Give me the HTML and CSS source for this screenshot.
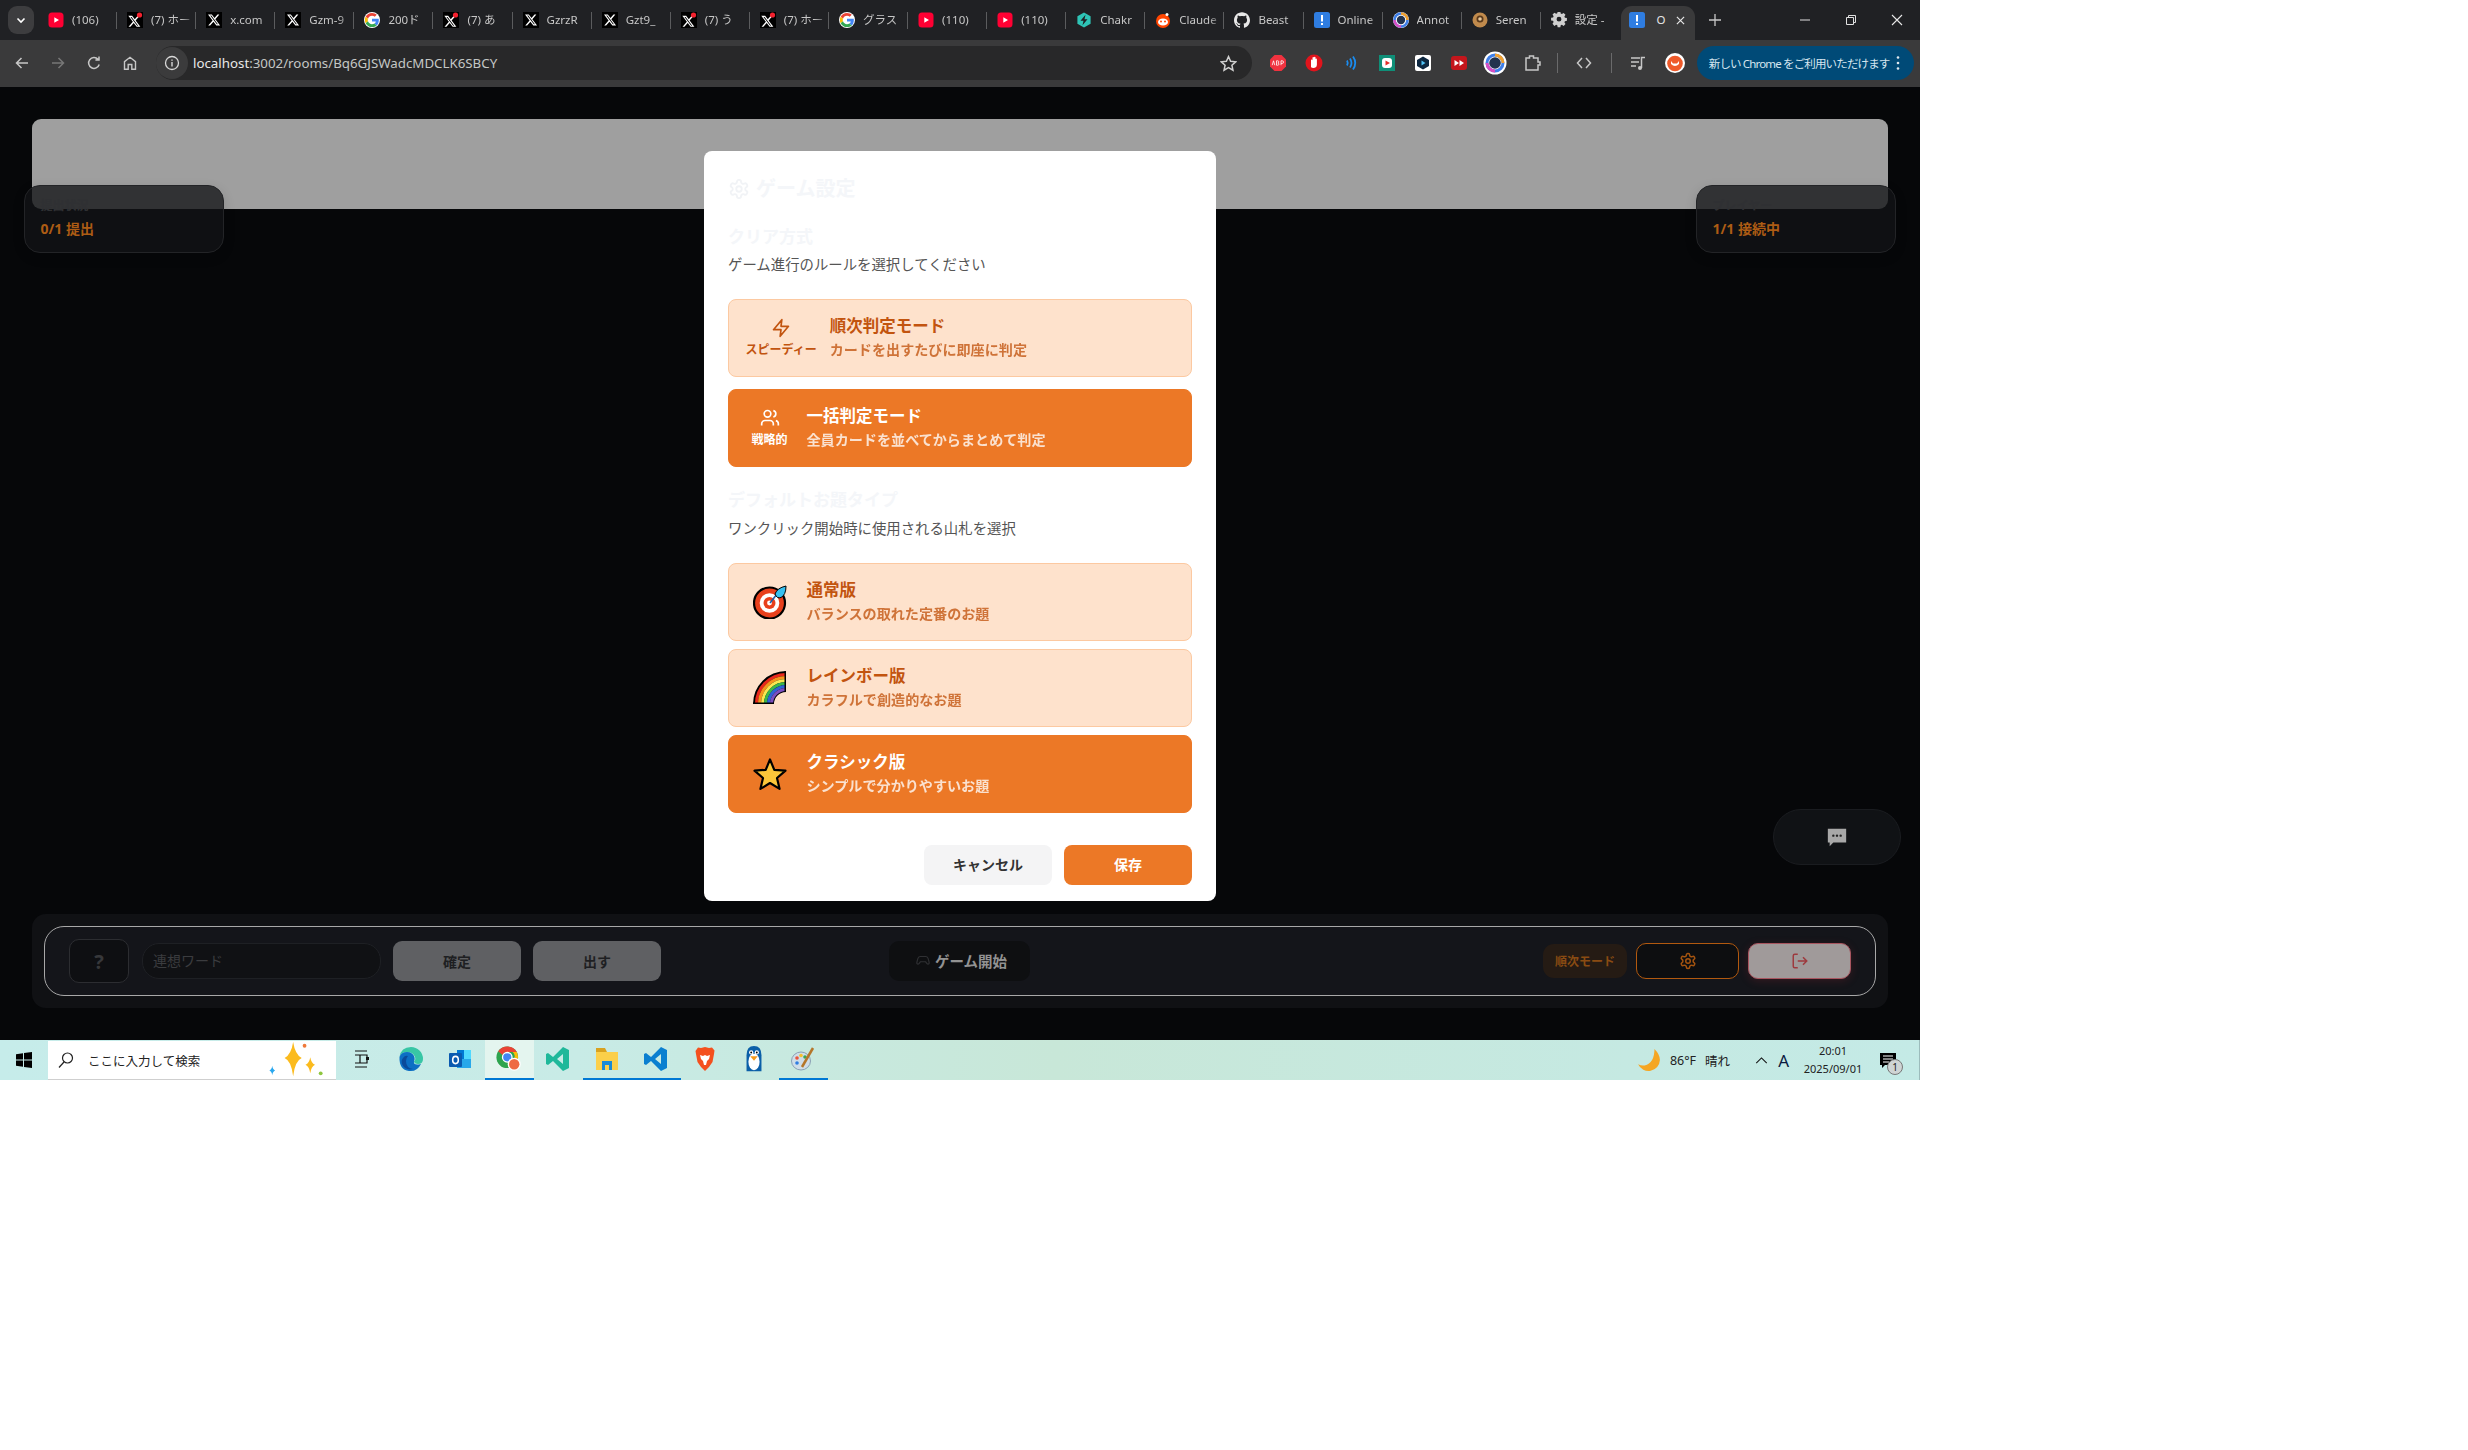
FILE: index.html
```html
<!DOCTYPE html>
<html lang="ja">
<head>
<meta charset="utf-8">
<title>Online</title>
<link rel="stylesheet" href="styles.css">
</head>
<body>
<svg class="sprite" xmlns="http://www.w3.org/2000/svg">
  <symbol id="yt" viewBox="0 0 16 16"><rect x="0.5" y="0.5" width="15" height="15" rx="3.5" fill="#ff0033"/><path d="M6.3 5.2v5.6L11 8z" fill="#fff"/></symbol>
  <symbol id="x" viewBox="0 0 16 16"><rect width="16" height="16" fill="#000"/><path transform="translate(1.3 1.3) scale(.56)" fill="#fff" d="M18.244 2.25h3.308l-7.227 8.26 8.502 11.24H16.17l-5.214-6.817L4.99 21.75H1.68l7.73-8.835L1.254 2.25H8.08l4.713 6.231zm-1.161 17.52h1.833L7.084 4.126H5.117z"/></symbol>
  <symbol id="xd" viewBox="0 0 16 16"><rect width="16" height="16" fill="#000"/><path transform="translate(.6 2.6) scale(.56)" fill="#fff" d="M18.244 2.25h3.308l-7.227 8.26 8.502 11.24H16.17l-5.214-6.817L4.99 21.75H1.68l7.73-8.835L1.254 2.25H8.08l4.713 6.231zm-1.161 17.52h1.833L7.084 4.126H5.117z"/><circle cx="12.5" cy="3" r="2.6" fill="#f4212e"/></symbol>
  <symbol id="g" viewBox="-3 -3 54 54"><circle cx="24" cy="24" r="27" fill="#fff"/><path fill="#EA4335" d="M24 9.5c3.54 0 6.71 1.22 9.21 3.6l6.85-6.85C35.9 2.38 30.47 0 24 0 14.62 0 6.51 5.38 2.56 13.22l7.98 6.19C12.43 13.72 17.74 9.5 24 9.5z"/><path fill="#4285F4" d="M46.98 24.55c0-1.57-.15-3.09-.38-4.55H24v9.02h12.94c-.58 2.96-2.26 5.48-4.78 7.18l7.73 6c4.51-4.18 7.09-10.36 7.09-17.65z"/><path fill="#FBBC05" d="M10.53 28.59c-.48-1.45-.76-2.99-.76-4.59s.27-3.14.76-4.59l-7.98-6.19C.92 16.46 0 20.12 0 24c0 3.88.92 7.54 2.56 10.78l7.97-6.19z"/><path fill="#34A853" d="M24 48c6.48 0 11.93-2.13 15.89-5.81l-7.73-6c-2.15 1.45-4.92 2.3-8.16 2.3-6.26 0-11.57-4.22-13.47-9.91l-7.98 6.19C6.51 42.62 14.62 48 24 48z"/></symbol>
  <symbol id="chakra" viewBox="0 0 16 16"><path d="M8 .5l6.6 3.7v7.6L8 15.5l-6.6-3.7V4.200z" fill="#2ec4b6"/><path d="M9.5 2.800L4.500 8.800h3l-1 4.400 5-6h-3z" fill="#202124"/></symbol>
  <symbol id="reddit" viewBox="0 0 16 16"><circle cx="8" cy="9" r="7" fill="#ff4500"/><circle cx="12" cy="2.500" r="1.500" fill="#fff"/><ellipse cx="8" cy="10" rx="5" ry="3.600" fill="#fff"/><circle cx="6" cy="9.500" r="1" fill="#ff4500"/><circle cx="10" cy="9.500" r="1" fill="#ff4500"/></symbol>
  <symbol id="gh" viewBox="0 0 24 24"><path fill="#e8e8e8" d="M12 .297c-6.63 0-12 5.373-12 12 0 5.303 3.438 9.8 8.205 11.385.6.113.82-.258.82-.577 0-.285-.01-1.04-.015-2.04-3.338.724-4.042-1.61-4.042-1.61C4.422 18.07 3.633 17.7 3.633 17.7c-1.087-.744.084-.729.084-.729 1.205.084 1.838 1.236 1.838 1.236 1.07 1.835 2.809 1.305 3.495.998.108-.776.417-1.305.76-1.605-2.665-.3-5.466-1.332-5.466-5.93 0-1.31.465-2.38 1.235-3.22-.135-.303-.54-1.523.105-3.176 0 0 1.005-.322 3.3 1.23.96-.267 1.98-.399 3-.405 1.02.006 2.04.138 3 .405 2.28-1.552 3.285-1.23 3.285-1.23.645 1.653.24 2.873.12 3.176.765.84 1.23 1.91 1.23 3.22 0 4.61-2.805 5.625-5.475 5.92.42.36.81 1.096.81 2.22 0 1.606-.015 2.896-.015 3.286 0 .315.21.69.825.57C20.565 22.092 24 17.592 24 12.297c0-6.627-5.373-12-12-12"/></symbol>
  <symbol id="online" viewBox="0 0 16 16"><rect width="16" height="16" rx="2.500" fill="#2f7de1"/><rect x="7" y="3" width="2" height="6.500" fill="#fff"/><rect x="7" y="11" width="2" height="2" fill="#fff"/></symbol>
  <symbol id="annot" viewBox="0 0 16 16"><circle cx="8" cy="8" r="8" fill="#fff"/><circle cx="8" cy="8" r="6.500" fill="none" stroke="#3f7fe8" stroke-width="2.600"/><path d="M8 1.500a6.500 6.500 0 0 1 6.500 6.500" fill="none" stroke="#f2a12e" stroke-width="2.600"/><path d="M1.500 8A6.500 6.500 0 0 0 8 14.500" fill="none" stroke="#d84fc4" stroke-width="2.600"/><circle cx="8" cy="8" r="4.200" fill="#23334d"/></symbol>
  <symbol id="seren" viewBox="0 0 16 16"><circle cx="8" cy="8" r="7.500" fill="#c08a4c"/><circle cx="8" cy="7" r="3.500" fill="#5a3a1c"/><circle cx="8" cy="7" r="1.800" fill="#e9c89a"/></symbol>
  <symbol id="cog" viewBox="0 0 16 16"><path fill="#cfcfcf" fill-rule="evenodd" d="M6.500 0h3l.4 2.200 1.300.6 1.900-1.200 2.100 2.100-1.200 1.900.6 1.300 2.200.4v3l-2.200.4-.6 1.300 1.200 1.900-2.100 2.100-1.900-1.200-1.300.6-.4 2.200h-3l-.4-2.200-1.300-.6-1.900 1.200L.8 13.600 2 11.700l-.6-1.300L-.800 10V7l2.200-.4.600-1.300L.8 3.400l2.100-2.100 1.900 1.200 1.300-.6zM8 5.800a2.700 2.700 0 1 0 0 5.400 2.700 2.700 0 0 0 0-5.400z" transform="translate(.8 -.5) scale(.9)"/></symbol>
  <symbol id="gear" viewBox="0 0 24 24"><path d="M12.220 2h-.44a2 2 0 0 0-2 2v.18a2 2 0 0 1-1 1.730l-.43.250a2 2 0 0 1-2 0l-.15-.08a2 2 0 0 0-2.730.730l-.22.380a2 2 0 0 0 .730 2.730l.15.100a2 2 0 0 1 1 1.720v.510a2 2 0 0 1-1 1.740l-.15.090a2 2 0 0 0-.730 2.730l.22.380a2 2 0 0 0 2.730.730l.15-.08a2 2 0 0 1 2 0l.43.250a2 2 0 0 1 1 1.730V20a2 2 0 0 0 2 2h.44a2 2 0 0 0 2-2v-.18a2 2 0 0 1 1-1.730l.43-.25a2 2 0 0 1 2 0l.15.080a2 2 0 0 0 2.730-.730l.22-.39a2 2 0 0 0-.730-2.730l-.15-.08a2 2 0 0 1-1-1.740v-.5a2 2 0 0 1 1-1.740l.15-.09a2 2 0 0 0 .730-2.730l-.22-.38a2 2 0 0 0-2.730-.73l-.15.080a2 2 0 0 1-2 0l-.43-.25a2 2 0 0 1-1-1.730V4a2 2 0 0 0-2-2z"/><circle cx="12" cy="12" r="3"/></symbol>
</svg>

<div class="screen">
  <div class="tabstrip">
    <div class="tablist"><svg class="ic16" viewBox="0 0 16 16"><path d="M4.500 6.500 8 10l3.500-3.500" fill="none" stroke="#fff" stroke-width="1.600"/></svg></div>
    <div class="tab"><svg class="fav"><use href="#yt"/></svg><span class="tt">(106)</span></div>
    <div class="tab"><svg class="fav"><use href="#xd"/></svg><span class="tt">(7) ホー</span></div>
    <div class="tab"><svg class="fav"><use href="#x"/></svg><span class="tt">x.com</span></div>
    <div class="tab"><svg class="fav"><use href="#x"/></svg><span class="tt">Gzm-9</span></div>
    <div class="tab"><svg class="fav"><use href="#g"/></svg><span class="tt">200ド</span></div>
    <div class="tab"><svg class="fav"><use href="#xd"/></svg><span class="tt">(7) あ</span></div>
    <div class="tab"><svg class="fav"><use href="#x"/></svg><span class="tt">GzrzR</span></div>
    <div class="tab"><svg class="fav"><use href="#x"/></svg><span class="tt">Gzt9_</span></div>
    <div class="tab"><svg class="fav"><use href="#xd"/></svg><span class="tt">(7) う</span></div>
    <div class="tab"><svg class="fav"><use href="#xd"/></svg><span class="tt">(7) ホー</span></div>
    <div class="tab"><svg class="fav"><use href="#g"/></svg><span class="tt">グラス</span></div>
    <div class="tab"><svg class="fav"><use href="#yt"/></svg><span class="tt">(110)</span></div>
    <div class="tab"><svg class="fav"><use href="#yt"/></svg><span class="tt">(110)</span></div>
    <div class="tab"><svg class="fav"><use href="#chakra"/></svg><span class="tt">Chakr</span></div>
    <div class="tab"><svg class="fav"><use href="#reddit"/></svg><span class="tt">Claude</span></div>
    <div class="tab"><svg class="fav"><use href="#gh"/></svg><span class="tt">Beast</span></div>
    <div class="tab"><svg class="fav"><use href="#online"/></svg><span class="tt">Online</span></div>
    <div class="tab"><svg class="fav"><use href="#annot"/></svg><span class="tt">Annot</span></div>
    <div class="tab"><svg class="fav"><use href="#seren"/></svg><span class="tt">Seren</span></div>
    <div class="tab"><svg class="fav"><use href="#cog"/></svg><span class="tt">設定 -</span></div>
    <div class="tab-active"><svg class="fav"><use href="#online"/></svg><span class="tt tt-active">O</span><svg class="closex" viewBox="0 0 10 10"><path d="M1 1l8 8M9 1l-8 8" stroke="#e8e8e8" stroke-width="1.300"/></svg></div>
    <div class="newtab"><svg class="ic12" viewBox="0 0 12 12"><path d="M6 0v12M0 6h12" stroke="#c8c8c8" stroke-width="1.300"/></svg></div>
    <div class="winctl"><svg class="ic10" viewBox="0 0 10 10"><path d="M0 5h10" stroke="#e0e0e0"/></svg></div>
    <div class="winctl"><svg class="ic10" viewBox="0 0 10 10"><path d="M.5 2.500h7v7h-7zM2.500 2.500v-2h7v7h-2" fill="none" stroke="#e0e0e0"/></svg></div>
    <div class="winctl"><svg class="ic12" viewBox="0 0 12 12"><path d="M1 1l10 10M11 1L1 11" stroke="#e8e8e8" stroke-width="1.100"/></svg></div>
  </div>

  <div class="toolbar">
    <div class="navbtn"><svg class="ic16" viewBox="0 0 16 16"><path d="M14 8H2.500M7.500 3 2.500 8l5 5" fill="none" stroke="#c7c7c7" stroke-width="1.500"/></svg></div>
    <div class="navbtn"><svg class="ic16" viewBox="0 0 16 16"><path d="M2 8h11.500M8.500 3l5 5-5 5" fill="none" stroke="#777" stroke-width="1.500"/></svg></div>
    <div class="navbtn"><svg class="ic16" viewBox="0 0 16 16"><path d="M13.200 9.500A5.400 5.400 0 1 1 12 4.300M13 1.500v3.600H9.400" fill="none" stroke="#c7c7c7" stroke-width="1.500"/></svg></div>
    <div class="navbtn"><svg class="ic16" viewBox="0 0 16 16"><path d="M2.500 14.200V6.700L8 2.300l5.500 4.400v7.500h-3.700V9.500H6.200v4.700z" fill="none" stroke="#c7c7c7" stroke-width="1.400"/></svg></div>
    <div class="omnibox">
      <div class="infochip"><svg class="ic16" viewBox="0 0 16 16"><circle cx="8" cy="8" r="6.500" fill="none" stroke="#d8d8d8" stroke-width="1.300"/><path d="M8 7v4.500M8 4.500v1.300" stroke="#d8d8d8" stroke-width="1.400"/></svg></div>
      <span class="url">localhost<span class="url-dim">:3002/rooms/Bq6GJSWadcMDCLK6SBCY</span></span>
      <svg class="star" viewBox="0 0 16 16"><path d="M8 1.500l2 4.400 4.800.5-3.600 3.200 1 4.700L8 11.900l-4.200 2.400 1-4.700L1.200 6.400 6 5.900z" fill="none" stroke="#d0d0d0" stroke-width="1.400"/></svg>
    </div>
    <div class="exts">
      <div class="ext"><svg class="ic18" viewBox="0 0 18 18"><path d="M5.500 1h7L17 5.500v7L12.500 17h-7L1 12.500v-7z" fill="#f0323f"/><path d="M3.200 11.200l1.300-4.400 1.300 4.400M7.500 6.800v4.400h1.300q1.200-.1 1.200-1.100t-1.200-1.100q1-.1 1-1.100t-1-1.100zM12 11.200V6.800h1.200q1.300 0 1.300 1.300t-1.300 1.300H12" fill="none" stroke="#fff" stroke-width=".8"/></svg></div>
      <div class="ext"><svg class="ic18" viewBox="0 0 18 18"><circle cx="9" cy="9" r="8.500" fill="#e1141c"/><path d="M6 13V6.500q0-1 .7-1t.8 1V4q0-1 .8-1t.7 1v-.5q0-.8.8-.8t.7.8V5q0-.6.700-.6t.700.8V10.500q0 3-3 3.500-2.500 0-3-1z" fill="#fff"/></svg></div>
      <div class="ext"><svg class="ic18" viewBox="0 0 18 18"><path d="M6 6.500q1.500 2.500 0 5M9 4.500q3 4.500 0 9M12 2.500q4.500 6.500 0 13" fill="none" stroke="#1a8cf0" stroke-width="1.800"/></svg></div>
      <div class="ext"><svg class="ic18" viewBox="0 0 18 18"><rect x="1" y="1" width="16" height="16" fill="#0f8f78"/><rect x="4" y="4" width="10" height="10" rx="3" fill="#fff"/><path d="M7.500 6.500v5L12 9z" fill="#e52d27"/></svg></div>
      <div class="ext"><svg class="ic18" viewBox="0 0 18 18"><rect x="1" y="1" width="16" height="16" rx="2" fill="#fff"/><path d="M9 2.500 15 6v6l-6 3.500L3 12V6z" fill="#0d2740"/><path d="M7.500 6.500v5L11.500 9z" fill="#4fc3f7"/></svg></div>
      <div class="ext"><svg class="ic18" viewBox="0 0 18 18"><rect x="1" y="2" width="16" height="14" rx="3" fill="#c4161c"/><path d="M4.500 6v6L9 9zM9.500 6v6L14 9z" fill="#fff"/></svg></div>
      <div class="ext"><svg class="ic24" viewBox="0 0 24 24"><circle cx="12" cy="12" r="11.500" fill="#fff"/><circle cx="12" cy="12" r="8" fill="none" stroke="#3f7fe8" stroke-width="3"/><path d="M12 4a8 8 0 0 1 8 8" fill="none" stroke="#f2a12e" stroke-width="3"/><path d="M4 12a8 8 0 0 0 8 8" fill="none" stroke="#d84fc4" stroke-width="3"/><circle cx="12" cy="12" r="5.800" fill="#23334d"/></svg></div>
      <div class="ext"><svg class="ic18" viewBox="0 0 18 18"><path d="M3 4h3.500V2h4v2H15v4h2v3h-2v5H3z" fill="none" stroke="#c7c7c7" stroke-width="1.500"/></svg></div>
    </div>
    <div class="vsep vsep-a"></div>
    <div class="ext ext-code"><svg class="ic18" viewBox="0 0 18 18"><path d="M7 4 2.500 9 7 14M11 4l4.500 5L11 14" fill="none" stroke="#c7c7c7" stroke-width="1.500"/></svg></div>
    <div class="vsep vsep-b"></div>
    <div class="ext ext-music"><svg class="ic18" viewBox="0 0 18 18"><path d="M2 4h9M2 8h8M2 12h5M12.500 14V3.500H16" fill="none" stroke="#c7c7c7" stroke-width="1.500"/><circle cx="11" cy="14" r="2" fill="#c7c7c7"/></svg></div>
    <div class="ext"><svg class="ic20" viewBox="0 0 20 20"><circle cx="10" cy="10" r="10" fill="#fff"/><circle cx="10" cy="10.500" r="7.800" fill="#ef5a2a"/><path d="M6 8v3q4 4 8 0V8L12 10.500H8z" fill="#fff"/></svg></div>
    <div class="update"><span>新しい Chrome をご利用いただけます</span><svg class="kebab" viewBox="0 0 4 16"><circle cx="2" cy="2.500" r="1.300" fill="#e0e8ee"/><circle cx="2" cy="8" r="1.300" fill="#e0e8ee"/><circle cx="2" cy="13.500" r="1.300" fill="#e0e8ee"/></svg></div>
  </div>

  <main class="stage">
    <div class="hero"></div>
    <section class="statcard statcard-left"><div class="stat-label">提出状況</div><div class="stat-value">0/1 提出</div></section>
    <section class="statcard statcard-right"><div class="stat-label">プレイヤー</div><div class="stat-value">1/1 接続中</div></section>
    <div class="chatbtn"><svg class="chat-ic" viewBox="0 0 24 24"><path d="M2 3h20v15H8l-4 4v-4H2z" fill="#a8a8a8"/><circle cx="8" cy="10.500" r="1.300" fill="#222"/><circle cx="12" cy="10.500" r="1.300" fill="#222"/><circle cx="16" cy="10.500" r="1.300" fill="#222"/></svg></div>

    <div class="dock">
      <div class="dock-inner">
        <div class="qbox">?</div>
        <div class="wordinput">連想ワード</div>
        <div class="graybtn">確定</div>
        <div class="graybtn">出す</div>
        <div class="startbtn"><svg class="pad" viewBox="0 0 24 24"><path d="M7 6h10q3 0 4 4l1.500 6q.5 3-2 3-1.500 0-3-2.500l-1-1.500H7.500l-1 1.500Q5 19 3.500 19q-2.500 0-2-3L3 10q1-4 4-4z" fill="none" stroke="#2f3033" stroke-width="2"/></svg><span>ゲーム開始</span></div>
        <div class="modechip">順次モード</div>
        <div class="iconbtn iconbtn-gear"><svg class="ic18 stroke-gear"><use href="#gear"/></svg></div>
        <div class="iconbtn iconbtn-exit"><svg class="ic18" viewBox="0 0 24 24"><path d="M9 21H5a2 2 0 0 1-2-2V5a2 2 0 0 1 2-2h4M16 17l5-5-5-5M21 12H9" fill="none" stroke="#9d3a3e" stroke-width="2"/></svg></div>
      </div>
    </div>

    <div class="overlay">
      <div class="modal">
        <h2 class="modal-title"><svg class="ic22 stroke-faint"><use href="#gear"/></svg>ゲーム設定</h2>
        <h3 class="sec-head sec-head-first">クリア方式</h3>
        <p class="sec-desc">ゲーム進行のルールを選択してください</p>
        <div class="opts opts-mode">
          <div class="opt">
            <div class="opt-side"><svg class="ic20" viewBox="0 0 24 24"><path d="M13 2 3 14h9l-1 8 10-12h-9z" fill="none" stroke="currentColor" stroke-width="2" stroke-linejoin="round"/></svg><span class="opt-tag">スピーディー</span></div>
            <div><div class="opt-title">順次判定モード</div><div class="opt-desc">カードを出すたびに即座に判定</div></div>
          </div>
          <div class="opt opt-on">
            <div class="opt-side"><svg class="ic20" viewBox="0 0 24 24"><path d="M16 21v-2a4 4 0 0 0-4-4H6a4 4 0 0 0-4 4v2M22 21v-2a4 4 0 0 0-3-3.870M16 3.130a4 4 0 0 1 0 7.750" fill="none" stroke="currentColor" stroke-width="2"/><circle cx="9" cy="7" r="4" fill="none" stroke="currentColor" stroke-width="2"/></svg><span class="opt-tag">戦略的</span></div>
            <div><div class="opt-title">一括判定モード</div><div class="opt-desc">全員カードを並べてからまとめて判定</div></div>
          </div>
        </div>
        <h3 class="sec-head sec-head-second">デフォルトお題タイプ</h3>
        <p class="sec-desc sec-desc-second">ワンクリック開始時に使用される山札を選択</p>
        <div class="opts opts-deck">
          <div class="opt">
            <div class="opt-side"><svg class="emoji" viewBox="0 0 34 34"><circle cx="16.500" cy="18" r="15.500" fill="#e8401c" stroke="#000" stroke-width="2.200"/><circle cx="16.500" cy="18" r="9.800" fill="#fff"/><circle cx="16.500" cy="18" r="6" fill="#e8401c"/><circle cx="16.500" cy="18" r="2.400" fill="#fff"/><path d="M17 18 24 9" stroke="#1c5fa8" stroke-width="1.600"/><path d="M22 9q2-6 11-8 0 9-5 11.500-4 1.500-6-3.500z" fill="#36c0f0" stroke="#000" stroke-width="1"/></svg></div>
            <div><div class="opt-title">通常版</div><div class="opt-desc">バランスの取れた定番のお題</div></div>
          </div>
          <div class="opt">
            <div class="opt-side"><svg class="emoji" viewBox="0 0 34 34"><path d="M0 33A33 33 0 0 1 33 0V21A12 12 0 0 0 21 33z" fill="#000"/><g fill="none" stroke-width="3.100"><path d="M3.500 33A29.500 29.500 0 0 1 33 3.500" stroke="#e8281c"/><path d="M6.500 33A26.500 26.500 0 0 1 33 6.500" stroke="#f7941d"/><path d="M9.500 33A23.500 23.500 0 0 1 33 9.500" stroke="#f9e64f"/><path d="M12.500 33A20.500 20.500 0 0 1 33 12.500" stroke="#3cb54a"/><path d="M15.500 33A17.500 17.500 0 0 1 33 15.500" stroke="#2e63d6"/><path d="M18.500 33A14.500 14.500 0 0 1 33 18.500" stroke="#7a4fc0"/></g><path d="M0 31.500h21V33H0zM31.500 0H33v21h-1.500z" fill="#000"/></svg></div>
            <div><div class="opt-title">レインボー版</div><div class="opt-desc">カラフルで創造的なお題</div></div>
          </div>
          <div class="opt opt-on">
            <div class="opt-side"><svg class="emoji" viewBox="0 0 34 34"><path d="M17 2.500l4.300 10.300 11.200.9-8.500 7.300 2.600 10.900L17 26l-9.600 5.900L10 21 1.500 13.700l11.200-.9z" fill="#fcc63a" stroke="#000" stroke-width="2.200" stroke-linejoin="round"/></svg></div>
            <div><div class="opt-title">クラシック版</div><div class="opt-desc">シンプルで分かりやすいお題</div></div>
          </div>
        </div>
        <div class="modal-actions">
          <div class="mbtn mbtn-cancel">キャンセル</div>
          <div class="mbtn mbtn-save">保存</div>
        </div>
      </div>
    </div>
  </main>

  <footer class="taskbar">
    <div class="startmenu"><svg class="ic18" viewBox="0 0 18 18"><path d="M1 3.200 8 2.200V8.500H1zM9 2 17 1v7.500H9zM1 9.500h7v6.300L1 14.800zM9 9.500h8V17L9 16z" fill="#000"/></svg></div>
    <div class="searchbox">
      <svg class="ic18" viewBox="0 0 18 18"><circle cx="10.500" cy="7" r="5" fill="none" stroke="#222" stroke-width="1.200"/><path d="M7 11 2 16.500" stroke="#222" stroke-width="1.200"/></svg>
      <span class="search-text">ここに入力して検索</span>
      <svg class="sparkle" viewBox="0 0 62 40"><path d="M28 1q2 13 9 17-7 3-9 19-2-16-9-19 7-4 9-17z" fill="#fbbb1e"/><path d="M46 17q1 6 5 8-4 2-5 9-1-7-5-9 4-2 5-8z" fill="#fbbb1e"/><path d="M6 26q.5 4 3 5-2.500 1-3 5-.5-4-3-5 2.500-1 3-5z" fill="#2aa8ef"/><circle cx="40" cy="5" r="2" fill="#ef7a3a"/><circle cx="57" cy="34" r="2" fill="#8ec63f"/></svg>
    </div>
    <div class="tbitem tbitem-view"><svg class="ic18" viewBox="0 0 18 18"><path d="M3 1h12M3 5h12v8H3M8 5v8M3 17h12" fill="none" stroke="#111" stroke-width="1.200"/><rect x="14" y="7" width="3" height="3" fill="#111"/></svg></div>
    <div class="tbitem"><svg class="tbic" viewBox="0 0 26 26"><path d="M13 1a12 12 0 0 1 12 12q0 5-5 5-4 0-4-3 2-1 1-4-2-5-8-5Q3 6 1.500 11 3 1 13 1z" fill="#38c6a5"/><path d="M1.500 11Q3 6 9 6q6 0 7.500 5.500.5 2-.5 3.500-1 5 7 3-4 8-12 7-10-1-9.500-14z" fill="#0c6fc4"/><path d="M8 15q0 7 7 8-8 2-11-5-1-4 1-6 2-3 5-2-2 2-2 5z" fill="#0a4a9a"/></svg></div>
    <div class="tbitem"><svg class="tbic" viewBox="0 0 26 26"><path d="M10 4h14v18H10z" fill="#28a8ea"/><path d="M10 4h7v9h-7z" fill="#0078d4"/><path d="M17 4h7v9h-7z" fill="#50d9ff"/><rect x="2" y="7" width="13" height="14" rx="1" fill="#0a5ab0"/><ellipse cx="8.500" cy="14" rx="2.800" ry="3.600" fill="none" stroke="#fff" stroke-width="1.600"/></svg></div>
    <div class="tbitem tbitem-chrome"><svg class="tbic" viewBox="0 0 30 30"><circle cx="13" cy="13" r="12.500" fill="#2ea44f"/><path d="M13 .5A12.500 12.500 0 0 1 24 7H13a6 6 0 0 0-5.500 3.500L2.500 6A12.500 12.500 0 0 1 13 .5z" fill="#ea4335"/><path d="M24 7a12.500 12.500 0 0 1-9 18l5-9a6 6 0 0 0-1-9z" fill="#fbbc05"/><circle cx="13" cy="13" r="5.500" fill="#4285f4" stroke="#fff" stroke-width="1.500"/><circle cx="21" cy="21" r="7.500" fill="#fff"/><circle cx="21" cy="21" r="6" fill="#ee6a44"/></svg></div>
    <div class="tbitem"><svg class="tbic" viewBox="0 0 26 26"><path d="M18 1l6 3v18l-6 3-10-10-5 4-2-1V8l2-1 5 4zM18 8l-6 5 6 5z" fill="#1fb89a"/></svg></div>
    <div class="tbitem tbitem-run"><svg class="tbic" viewBox="0 0 26 26"><rect x="2" y="6" width="22" height="18" fill="#fbcf4a"/><path d="M2 2h9l2 4H2z" fill="#d9a21f"/><rect x="8" y="15" width="10" height="9" fill="#1a8ad4"/><rect x="11" y="19" width="4" height="5" fill="#fbcf4a"/></svg></div>
    <div class="tbitem tbitem-run"><svg class="tbic" viewBox="0 0 26 26"><path d="M18 1l6 3v18l-6 3-10-10-5 4-2-1V8l2-1 5 4zM18 8l-6 5 6 5z" fill="#0a7fd0"/></svg></div>
    <div class="tbitem"><svg class="tbic" viewBox="0 0 26 26"><path d="M13 1l4 1 3-.5 2.500 3L22 8l-1.500 8L17 21l-4 4-4-4-3.500-5L4 8l-.5-3L6 1.500l3 .5z" fill="#f4501e"/><path d="M8 9l3 1 2-1 2 1 3-1-1 4-2 2-1 4h-2l-1-4-2-2z" fill="#fff"/></svg></div>
    <div class="tbitem"><svg class="tbic" viewBox="0 0 26 30"><path d="M13 1q8 0 8 10v17H5V11Q5 1 13 1z" fill="#0b5fa8"/><ellipse cx="13" cy="18" rx="6" ry="9" fill="#fff"/><circle cx="10" cy="8" r="2.300" fill="#fff"/><circle cx="16" cy="8" r="2.300" fill="#fff"/><circle cx="10" cy="8" r="1" fill="#000"/><circle cx="16" cy="8" r="1" fill="#000"/><path d="M9 12h8l-4 5z" fill="#f59a1c"/></svg></div>
    <div class="tbitem tbitem-run"><svg class="tbic" viewBox="0 0 26 26"><ellipse cx="11" cy="15" rx="9.500" ry="9" fill="#cfdde8" stroke="#8aa0b4"/><circle cx="7" cy="12" r="1.800" fill="#e9553a"/><circle cx="11" cy="9.500" r="1.800" fill="#f5c22e"/><circle cx="15" cy="11" r="1.800" fill="#3aa655"/><circle cx="7" cy="17" r="1.800" fill="#2f7de1"/><path d="M23 2 12 21" stroke="#b5762a" stroke-width="2.500"/></svg></div>
    <div class="tray">
      <svg class="moon" viewBox="0 0 22 22"><path d="M16 1q5 5 5 10A10.500 10.500 0 0 1 1 15q3 1.500 6 1 9-2 9-15z" fill="#f5a623"/></svg>
      <span class="tray-txt tray-temp">86°F</span>
      <span class="tray-txt tray-wx">晴れ</span>
      <svg class="ic-chev" viewBox="0 0 14 8"><path d="M1 7l6-6 6 6" fill="none" stroke="#111" stroke-width="1.200"/></svg>
      <span class="tray-a">A</span>
      <div class="clock"><span>20:01</span><span>2025/09/01</span></div>
      <div class="notif"><svg class="ic16" viewBox="0 0 16 16"><path d="M0 1h16v12H5l-3 3v-3H0z" fill="#000"/><path d="M3 4h10M3 7h10M3 10h6" stroke="#fff"/></svg><span class="badge">1</span></div>
    </div>
  </footer>
</div>
</body>
</html>
```

FILE: styles.css
```css
* { box-sizing: border-box; }
html, body { margin: 0; padding: 0; background: #fff; }
body { font-family: "Noto Sans", "Noto Sans CJK JP", sans-serif; height: 1450px; overflow: hidden; }
h2, h3, p { margin: 0; }
.sprite { position: absolute; width: 0; height: 0; }

.ic10 { width: 10px; height: 10px; display: block; }
.ic12 { width: 12px; height: 12px; display: block; }
.ic16 { width: 16px; height: 16px; display: block; }
.ic18 { width: 18px; height: 18px; display: block; }
.ic20 { width: 20px; height: 20px; display: block; }
.ic22 { width: 22px; height: 22px; display: block; flex: none; }
.ic24 { width: 24px; height: 24px; display: block; }

.screen { width: 1920px; height: 1080px; display: flex; flex-direction: column; overflow: hidden; }

/* tab strip */
.tabstrip { height: 40px; background: #202124; display: flex; align-items: center; flex: none; padding-left: 8px; }
.tablist { width: 26px; height: 28px; margin-right: 4px; border-radius: 9px; background: #3d3d3f; display: flex; align-items: center; justify-content: center; flex: none; }
.tab { width: 79.1px; height: 17px; flex: none; display: flex; align-items: center; gap: 8px; padding-left: 10px; padding-right: 4px; border-right: 1px solid #5b5c5e; }
.tab:nth-last-child(6) { border-right: 0; }
.fav { width: 16px; height: 16px; flex: none; display: block; }
.tt { font-size: 11.5px; line-height: 16px; color: #c7c7c7; white-space: nowrap; flex: 1; -webkit-mask-image: linear-gradient(90deg, #000 75%, rgba(0,0,0,.25)); mask-image: linear-gradient(90deg, #000 75%, rgba(0,0,0,.25)); }
.tab-active { width: 74px; height: 34px; margin-left: 1.6px; margin-top: 6px; flex: none; background: #3a3a3b; border-radius: 11px 11px 0 0; display: flex; align-items: center; padding: 0 11px 6px 8px; gap: 11px; }
.tt-active { flex: 1; color: #e6e6e6; -webkit-mask-image: none; mask-image: none; }
.closex { width: 9px; height: 9px; flex: none; display: block; }
.newtab { width: 40px; display: flex; justify-content: center; flex: none; }
.winctl { width: 46px; height: 40px; display: flex; align-items: center; justify-content: center; flex: none; }
.newtab + .winctl { margin-left: auto; }

/* toolbar */
.toolbar { height: 47px; background: #3a3a3b; flex: none; display: flex; align-items: center; padding: 0 0 1px 4px; }
.navbtn { width: 36px; display: flex; justify-content: center; flex: none; }
.omnibox { width: 1096px; height: 34px; margin-left: 8px; border-radius: 17px; background: #282829; display: flex; align-items: center; flex: none; }
.infochip { width: 32px; height: 32px; border-radius: 50%; background: #3b3b3c; display: flex; align-items: center; justify-content: center; flex: none; }
.url { margin-left: 5px; font-size: 13.3px; color: #e8e8e8; white-space: nowrap; flex: 1; }
.url-dim { color: #c4c7c5; }
.star { width: 17px; height: 17px; margin-right: 15.5px; display: block; flex: none; }
.exts { display: flex; margin-left: 7.5px; flex: none; }
.ext { width: 36.3px; display: flex; justify-content: center; align-items: center; flex: none; }
.vsep { width: 1px; height: 20px; background: #6a6a6b; flex: none; }
.vsep-a { margin-left: 7px; }
.ext-code { margin-left: 8px; }
.vsep-b { margin-left: 9px; }
.ext-music { margin-left: 8px; }
.update { width: 217px; height: 34px; margin-left: 4px; border-radius: 17px; background: #004a77; color: #d6e6f0; font-size: 11.5px; letter-spacing: -.85px; display: flex; align-items: center; justify-content: space-between; padding: 0 14px 0 12px; white-space: nowrap; flex: none; }
.kebab { width: 4px; height: 16px; display: block; flex: none; }

/* app stage */
.stage { position: relative; flex: 1; background: #060709; padding: 32px; display: flex; flex-direction: column; justify-content: space-between; }
.hero { height: 90px; background: #9f9f9f; border-radius: 9px; flex: none; }
.statcard { position: absolute; top: 98px; width: 200px; height: 68px; border: 1px solid #232427; border-radius: 16px; background: rgba(18,19,22,.78); padding: 12px 15.5px; box-shadow: 0 4px 12px rgba(0,0,0,.15); }
.statcard-left { left: 24px; }
.statcard-right { right: 24px; }
.stat-label { font-size: 12px; line-height: 16px; font-weight: 700; color: #2f3033; }
.stat-value { margin-top: 5px; font-size: 14px; line-height: 20px; font-weight: 700; color: #ad5c14; }
.chatbtn { position: absolute; left: 1773px; top: 722px; width: 128px; height: 56px; border-radius: 28px; background: #101215; border: 1px solid #1a1c20; display: flex; align-items: center; justify-content: center; }
.chat-ic { width: 22px; height: 22px; display: block; }

/* dock */
.dock { height: 94px; background: #101114; border-radius: 14px; padding: 12px; flex: none; }
.dock-inner { height: 70px; border: 1.5px solid #a8a8a8; border-radius: 20px; background: #14151a; display: flex; align-items: center; padding: 0 24px; }
.qbox { width: 60px; height: 44px; border: 1px solid #2c2d31; border-radius: 10px; background: #0e0f12; color: #37383b; font-size: 20px; font-weight: 700; display: flex; align-items: center; justify-content: center; flex: none; }
.wordinput { width: 239px; height: 36px; margin-left: 13px; border: 1px solid #1e2024; border-radius: 17px; background: #101114; color: #3b3c3f; font-size: 14px; line-height: 34px; padding-left: 10px; flex: none; }
.graybtn { width: 128px; height: 40px; margin-left: 12px; border-radius: 9px; background: #5f6063; color: #1e1f22; font-size: 14px; font-weight: 700; display: flex; align-items: center; justify-content: center; flex: none; }
.startbtn { width: 141px; height: 40px; margin-left: 228px; padding: 0 0 2px 4px; border-radius: 10px; background: #0e0f11; color: #929292; font-size: 14.5px; font-weight: 700; display: flex; align-items: center; justify-content: center; gap: 5px; flex: none; }
.pad { width: 14px; height: 14px; display: block; }
.modechip { width: 84px; height: 34px; margin-left: auto; border-radius: 11px; background: #251b14; color: #8a4b12; font-size: 12px; font-weight: 700; display: flex; align-items: center; justify-content: center; flex: none; }
.iconbtn { width: 103px; height: 36px; margin-left: 9px; border-radius: 10px; display: flex; align-items: center; justify-content: center; flex: none; }
.iconbtn-gear { background: #0d0e10; border: 1px solid #b2590f; }
.stroke-gear { fill: none; stroke: #a5540f; stroke-width: 2; width: 18px; height: 20px; }
.iconbtn-exit { background: #a09a9a; border: 1px solid #a8555f; box-shadow: 0 2px 8px rgba(150,40,50,.25); }

/* modal */
.overlay { position: absolute; inset: 0; display: flex; justify-content: center; align-items: flex-start; padding-top: 64px; }
.modal { width: 512px; height: 750px; background: #fff; border-radius: 8px; padding: 23px 24px 16px; display: flex; flex-direction: column; }
.modal-title { display: flex; align-items: center; gap: 6px; height: 30px; font-size: 20px; line-height: 30px; font-weight: 700; color: #f4f6f9; }
.stroke-faint { fill: none; stroke: #f1f3f6; stroke-width: 2; }
.sec-head { height: 26px; font-size: 17px; line-height: 26px; font-weight: 700; color: #f4f6f9; }
.sec-head-first { margin-top: 20px; }
.sec-head-second { margin-top: 20px; }
.sec-desc { margin-top: 5px; height: 20px; font-size: 14.4px; line-height: 20px; color: #555; }
.sec-desc-second { margin-top: 6px; }
.opts { display: flex; flex-direction: column; }
.opts-mode { margin-top: 24px; gap: 12px; }
.opts-deck { margin-top: 24px; gap: 8px; }
.opt { height: 78px; border: 1.5px solid #fcc9a1; border-radius: 8px; background: #fee2cc; color: #c2540f; display: flex; align-items: center; gap: 13px; padding-left: 16.5px; }
.opt-on { background: #ec7826; border-color: #ec7826; color: #fff; }
.opt-side { min-width: 48px; display: flex; flex-direction: column; align-items: center; gap: 3px; flex: none; }
.opt-tag { font-size: 12px; line-height: 18px; font-weight: 700; }
.opt-title { font-size: 16.5px; line-height: 24px; font-weight: 700; }
.opt-desc { font-size: 14.1px; line-height: 24px; font-weight: 700; opacity: .78; }
.emoji { width: 34px; height: 34px; display: block; }
.modal-actions { margin-top: 32px; display: flex; justify-content: flex-end; gap: 12px; }
.mbtn { width: 128px; height: 40px; padding-bottom: 2px; border-radius: 8px; font-size: 14px; font-weight: 700; display: flex; align-items: center; justify-content: center; }
.mbtn-cancel { background: #f4f4f5; color: #333; }
.mbtn-save { background: #ec7826; color: #fff; }

/* taskbar */
.taskbar { height: 40px; flex: none; background: linear-gradient(90deg, #c6ecea 0%, #c8ebe6 30%, #c8e7d8 55%, #c5e9e2 85%, #c4eae6 100%); display: flex; align-items: stretch; border-right: 1px solid #9cbcbc; }
.startmenu { width: 48px; display: flex; align-items: center; justify-content: center; flex: none; }
.searchbox { width: 288px; margin-top: 1px; background: #fff; border-bottom: 1px solid #cfcfcf; display: flex; align-items: center; padding-left: 9px; flex: none; }
.search-text { margin-left: 13px; font-size: 12.5px; color: #222; flex: 1; }
.sparkle { width: 68px; height: 38px; display: block; margin-right: 6px; }
.tbitem { width: 49px; display: flex; align-items: center; justify-content: center; flex: none; border-bottom: 2px solid transparent; }
.tbitem-view { margin-right: 1.5px; }
.tbic { width: 26px; height: 28px; display: block; }
.tbitem-chrome { background: #e4f5ef; border-bottom-color: #0078d4; }
.tbitem-run { border-bottom-color: #0078d4; }
.tray { margin-left: auto; display: flex; align-items: center; flex: none; padding-right: 8px; }
.moon { width: 24px; height: 24px; display: block; flex: none; }
.tray-txt { font-size: 12.5px; color: #222; white-space: nowrap; }
.tray-temp { margin-left: 9px; }
.tray-wx { margin-left: 9px; }
.ic-chev { width: 13px; height: 7px; margin-left: 25px; display: block; flex: none; }
.tray-a { margin-left: 10px; font-size: 17px; color: #0a1a40; }
.clock { margin-left: 15px; width: 58px; display: flex; flex-direction: column; align-items: center; font-size: 11px; line-height: 18px; color: #222; }
.notif { position: relative; margin-left: 18px; margin-right: 14px; width: 17px; }
.badge { position: absolute; left: 7px; top: 7px; width: 16px; height: 16px; border-radius: 50%; background: #cfd4d4; border: 1px solid #777; font-size: 10px; line-height: 14px; text-align: center; color: #222; }
```
